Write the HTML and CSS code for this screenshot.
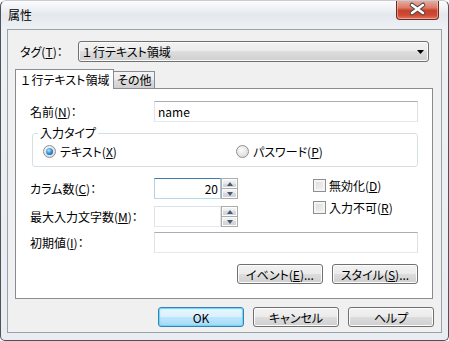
FILE: index.html
```html
<!DOCTYPE html>
<html lang="ja">
  <head>
    <meta charset="UTF-8" />
    <title>属性</title>
    <link rel="stylesheet" href="styles.css">
  </head>
  <body>
    <div class="window">
      <div class="titlebar">
        <span class="title">属性</span>
        <div class="close">
          <svg width="41" height="18" viewBox="0 0 41 18">
            <path d="M15 5 L26 13 M26 5 L15 13" stroke="#4a4444" stroke-width="4.6" stroke-linecap="round" fill="none"/>
            <path d="M15 5 L26 13 M26 5 L15 13" stroke="#fff" stroke-width="2.6" stroke-linecap="round" fill="none"/>
          </svg>
        </div>
      </div>

      <div class="client">
        <div class="tag-row">
          <span class="tag-label">タグ(<u>T</u>)：</span>
          <div class="combo">
            <span><span class="fw">１</span>行テキスト領域</span>
            <svg class="combo-arrow" width="7" height="4" viewBox="0 0 7 4"><path d="M0 0H7L3.5 4Z" fill="#000"/></svg>
          </div>
        </div>

        <div class="tabs">
          <div class="tab active"><span class="fw">１</span>行テキスト領域</div>
          <div class="tab">その他</div>
        </div>

        <div class="panel">
          <div class="row">
            <span class="lbl">名前(<u>N</u>)：</span>
            <div class="text">name</div>
          </div>

          <fieldset class="group">
            <legend>入力タイプ</legend>
            <div class="radios">
              <div class="option first"><span class="radio on"></span>テキスト(<u>X</u>)</div>
              <div class="option"><span class="radio"></span>パスワード(<u>P</u>)</div>
            </div>
          </fieldset>

          <div class="mid">
            <div class="mid-left">
              <div class="row">
                <span class="lbl">カラム数(<u>C</u>)：</span>
                <div class="spin">
                  <div class="spin-text focus">20</div>
                  <div class="spin-btns">
                    <span class="spin-btn"><i class="up"></i></span>
                    <span class="spin-btn"><i class="down"></i></span>
                  </div>
                </div>
              </div>
              <div class="row">
                <span class="lbl">最大入力文字数(<u>M</u>)：</span>
                <div class="spin">
                  <div class="spin-text"></div>
                  <div class="spin-btns">
                    <span class="spin-btn"><i class="up"></i></span>
                    <span class="spin-btn"><i class="down"></i></span>
                  </div>
                </div>
              </div>
            </div>
            <div class="checks">
              <div class="check"><span class="box"></span>無効化(<u>D</u>)</div>
              <div class="check"><span class="box"></span>入力不可(<u>R</u>)</div>
            </div>
          </div>

          <div class="row init-row">
            <span class="lbl">初期値(<u>I</u>)：</span>
            <div class="text"></div>
          </div>

          <div class="panel-btns">
            <div class="btn">イベント(<u>E</u>)...</div>
            <div class="btn">スタイル(<u>S</u>)...</div>
          </div>
        </div>

        <div class="dialog-btns">
          <div class="btn default">OK</div>
          <div class="btn">キャンセル</div>
          <div class="btn">ヘルプ</div>
        </div>
      </div>
    </div>
  </body>
</html>
```

FILE: styles.css
```css
* {
  margin: 0;
  padding: 0;
  box-sizing: border-box;
}

body {
  background: #fff;
  font-family: "Noto Sans CJK JP", "Noto Sans", sans-serif;
  font-size: 12px;
  font-feature-settings: "palt";
  color: #000;
}

u {
  text-decoration: underline;
  text-underline-offset: 1px;
}

/* full width digit keeps its side bearings */
.fw {
  font-feature-settings: normal;
}

/* window frame */
.window {
  width: 449px;
  height: 341px;
  border: 1px solid #4e5258;
  border-top-color: #c9ccd1;
  border-radius: 6px 6px 5px 5px;
  background: linear-gradient(#fdfdfe, #e4e8ed 14px, #eef1f4 28px, #e9ecf0);
  display: flex;
  flex-direction: column;
  overflow: hidden;
}

.titlebar {
  height: 28px;
  display: flex;
  align-items: flex-start;
  padding: 0 9px 0 7px;
}

.title {
  line-height: 28px;
}

.close {
  margin-left: auto;
  margin-top: -1px;
  width: 43px;
  height: 20px;
  border: 1px solid #6b2b22;
  border-top: none;
  border-radius: 0 0 4px 4px;
  background: linear-gradient(#e9b2a6, #dc7c69 40%, #c8432e 55%, #cf4a33 80%, #e27a61);
  box-shadow: inset 0 0 0 1px rgba(255, 210, 200, 0.5);
}

.close svg {
  display: block;
}

/* client area */
.client {
  flex: 1;
  margin: 0 6px 7px;
  border: 1px solid #9ba1a8;
  background: #f0f0f0;
  padding: 0 8px 0 7px;
}

.tag-row {
  display: flex;
  align-items: center;
  margin-top: 11px;
  padding-left: 5px;
  height: 21px;
}

.tag-label {
  width: 58px;
}

.combo {
  flex: 1;
  margin-right: 4px;
  height: 21px;
  border: 1px solid #707070;
  border-radius: 3px;
  background: linear-gradient(#f2f2f2, #ebebeb 50%, #dddddd 50%, #cfcfcf);
  box-shadow: inset 0 0 0 1px #fafafa;
  display: flex;
  align-items: center;
  padding: 0 4px 0 2px;
}

.combo-arrow {
  margin-left: auto;
}

/* tabs */
.tabs {
  display: flex;
  align-items: flex-end;
  margin-top: 7px;
  height: 19px;
}

.tab {
  height: 17px;
  border: 1px solid #898c95;
  border-bottom: none;
  background: linear-gradient(#f3f3f3, #ebebeb 50%, #dddddd 50%, #cfcfcf);
  padding: 0 3px;
  line-height: 16px;
  margin-left: -1px;
}

.tab.active {
  position: relative;
  z-index: 1;
  height: 20px;
  width: 99px;
  margin: 0 0 -1px 0;
  background: #fff;
  text-align: center;
  line-height: 19px;
}

.panel {
  height: 211px;
  border: 1px solid #898c95;
  background: #fff;
  padding: 12px 14px 0;
}

.row {
  display: flex;
  align-items: center;
  height: 21px;
}

.lbl {
  width: 124px;
}

.text {
  flex: 1;
  height: 21px;
  border: 1px solid;
  border-color: #abadb3 #dbdfe6 #e3e9ef #e2e3ea;
  padding-left: 3px;
  line-height: 19px;
}

/* group box */
.group {
  margin: 4px 0 0 2px;
  border: 1px solid #d5dfe5;
  border-radius: 3px;
}

.group legend {
  margin-left: 5px;
  padding: 0 2px;
  line-height: 14px;
}

.radios {
  display: flex;
  align-items: center;
  height: 26px;
  padding: 0 0 4px 10px;
}

.option {
  display: flex;
  align-items: center;
}

.option.first {
  width: 193px;
}

.radio {
  width: 13px;
  height: 13px;
  margin-right: 4px;
  border-radius: 50%;
  border: 1px solid #8e8f8f;
  background: radial-gradient(circle at 40% 35%, #fbfbfb, #d4d4d4);
  display: flex;
  align-items: center;
  justify-content: center;
}

.radio.on::after {
  content: "";
  width: 7px;
  height: 7px;
  border-radius: 50%;
  background: radial-gradient(circle at 40% 35%, #a8e4ff, #2a86d4 55%, #0d3f78);
}

/* spin boxes and checks */
.mid {
  display: flex;
  margin-top: 11px;
}

.mid-left {
  display: flex;
  flex-direction: column;
  gap: 7px;
}

.spin {
  display: flex;
  width: 84px;
  height: 21px;
}

.spin-text {
  flex: 1;
  border: 1px solid;
  border-color: #dbdfe6 #e2e3ea #e3e9ef #e2e3ea;
  text-align: right;
  padding-right: 2px;
  line-height: 19px;
}

.spin-text.focus {
  border-color: #3d7bad #a4c9e3 #b7d9ed #b5cfe7;
}

.spin-btns {
  width: 17px;
  display: flex;
  flex-direction: column;
}

.spin-btn {
  flex: 1;
  border: 1px solid #acacac;
  background: linear-gradient(#f7f7f7, #e8e8e8 50%, #dadada 50%, #d0d0d0);
  box-shadow: inset 0 0 0 1px #fcfcfc;
  display: flex;
  align-items: center;
  justify-content: center;
}

.spin-btn + .spin-btn {
  border-top: none;
}

.spin-btn i {
  width: 0;
  height: 0;
  border-left: 3.5px solid transparent;
  border-right: 3.5px solid transparent;
}

.spin-btn .up {
  border-bottom: 4px solid #44587e;
}

.spin-btn .down {
  border-top: 4px solid #44587e;
}

.checks {
  margin-left: 75px;
  padding-top: 1px;
  display: flex;
  flex-direction: column;
  gap: 9px;
}

.check {
  display: flex;
  align-items: center;
  height: 13px;
}

.box {
  width: 13px;
  height: 13px;
  margin-right: 3px;
  border: 1px solid #8e8f8f;
  background: linear-gradient(135deg, #d8d8d8, #f6f6f6);
  box-shadow: inset 0 0 0 2px #f4f4f4;
}

.init-row {
  margin-top: 5px;
}

/* buttons */
.panel-btns {
  display: flex;
  justify-content: flex-end;
  gap: 9px;
  margin-top: 11px;
}

.btn {
  width: 86px;
  height: 20px;
  border: 1px solid #707070;
  border-radius: 3px;
  background: linear-gradient(#f2f2f2, #ebebeb 50%, #dddddd 50%, #cfcfcf);
  box-shadow: inset 0 0 0 1px #fcfcfc;
  display: flex;
  align-items: center;
  justify-content: center;
}

.btn.default {
  border-color: #3c7fb1;
  background: linear-gradient(#eaf6fd, #d9f0fc 50%, #bee6fd 50%, #a7d9f5);
  box-shadow: inset 0 0 1px 1px #62d6fb;
}

.dialog-btns {
  display: flex;
  justify-content: flex-end;
  gap: 9px;
  margin: 8px -1px 0 0;
}
```
